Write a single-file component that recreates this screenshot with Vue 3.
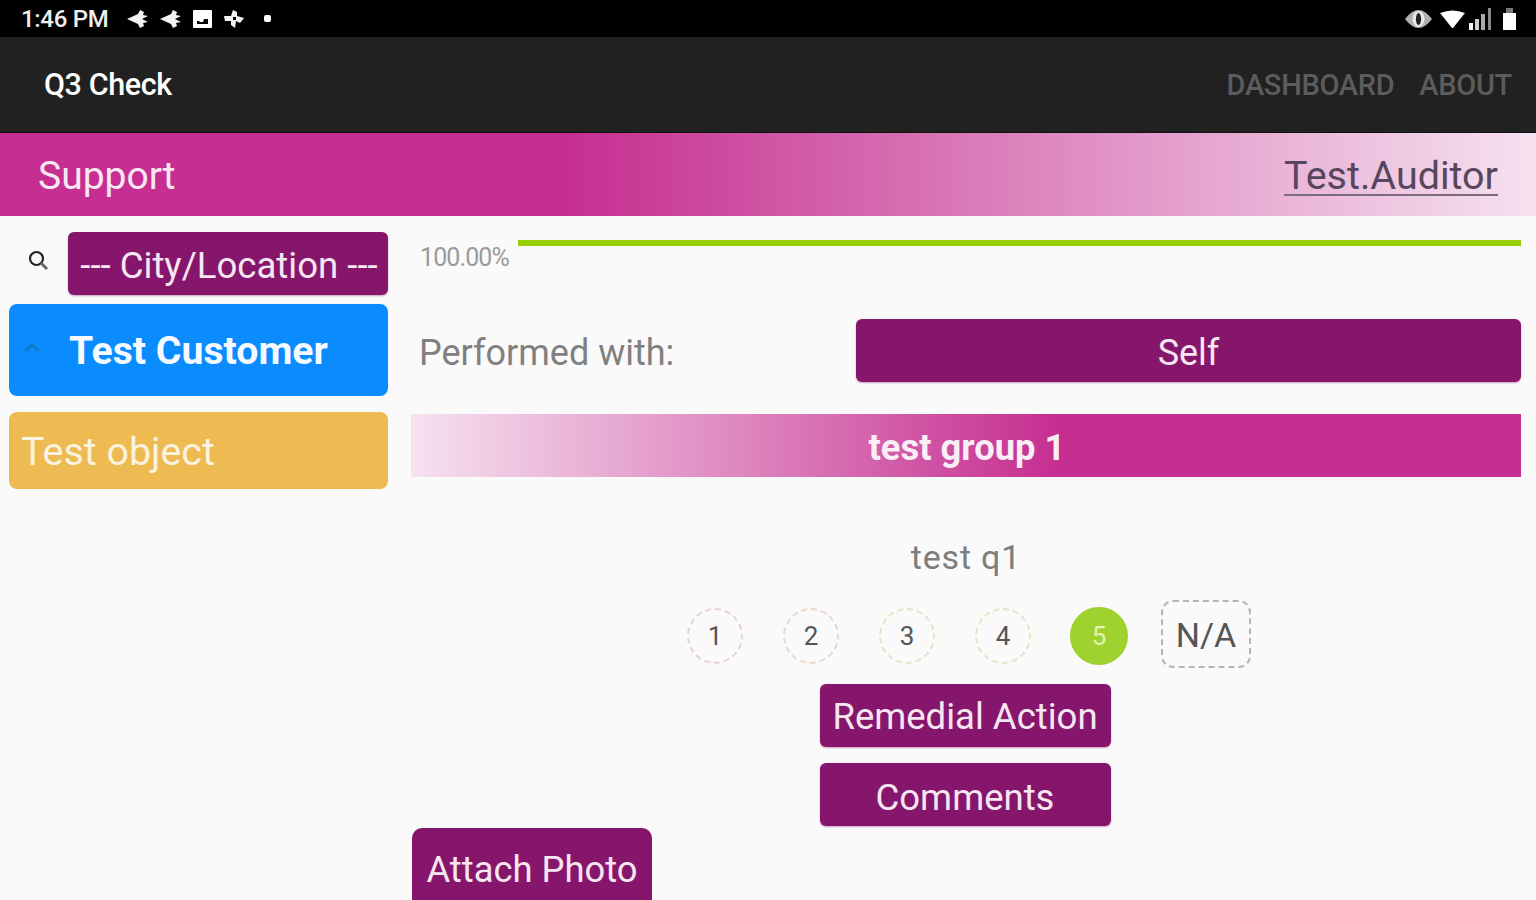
<template>
  <div class="screen">
    <div class="status-bar">
      <div class="status-left">
        <span class="clock">1:46 PM</span>
        <svg class="st-icon" width="21" height="18" viewBox="0 0 21 18"><path d="M0 9 L11 4 L13 0 L17 2 L16 5 L21 6 L15 9 L21 12 L16 13 L17 16 L13 18 L11 14 Z" fill="#f2f2f2" /></svg>
        <svg class="st-icon" width="21" height="18" viewBox="0 0 21 18"><path d="M0 9 L11 4 L13 0 L17 2 L16 5 L21 6 L15 9 L21 12 L16 13 L17 16 L13 18 L11 14 Z" fill="#f2f2f2" /></svg>
        <svg class="st-icon" width="19" height="18" viewBox="0 0 19 18"><path fill-rule="evenodd" d="M1 0 H18 Q19 0 19 1 V17 Q19 18 18 18 H1 Q0 18 0 17 V1 Q0 0 1 0 Z M4 14 H15 V9 H11 L10 12 H7 L6 11 H4 Z" fill="#fff" /></svg>
        <svg class="st-icon" width="20" height="18" viewBox="0 0 20 18"><path d="M9 0 L13 2 L13 6 L20 8 L16 13 L12 11 L11 18 L7 15 L7 11 L1 11 L0 6 L7 6 Z M9 7 L9 10 L12 10 L12 7 Z" fill="#f2f2f2" fill-rule="evenodd" /></svg>
        <span class="dot"></span>
      </div>
      <div class="status-right">
        <svg class="st-icon eye" width="27" height="18" viewBox="0 0 27 18">
          <path d="M0 9 Q7 0 13.5 0 Q20 0 27 9 Q20 18 13.5 18 Q7 18 0 9 Z" fill="#b0b0b0" />
          <ellipse cx="13.5" cy="9" rx="6" ry="8" fill="#e8e8e8" />
          <ellipse cx="13.5" cy="9" rx="2.6" ry="6" fill="#222" />
        </svg>
        <svg class="st-icon wifi" width="25" height="18" viewBox="0 0 25 18"><path d="M0 3 Q12.5 -2 25 3 L13 18 H12 Z" fill="#fff" /></svg>
        <svg class="st-icon signal" width="23" height="22" viewBox="0 0 23 22"><rect x="0" y="15" width="4" height="7" fill="#f2f2f2" /><rect x="6" y="11" width="4" height="11" fill="#ccc" /><rect x="12" y="6" width="4" height="16" fill="#aaa" /><rect x="19" y="0" width="3" height="22" fill="#888" /></svg>
        <svg class="st-icon battery" width="15" height="22" viewBox="0 0 15 22"><rect x="4" y="0" width="7" height="5" fill="#777" /><rect x="1" y="5" width="13" height="17" fill="#fff" /></svg>
      </div>
    </div>

    <header class="app-bar">
      <span class="app-title">Q3 Check</span>
      <nav class="app-nav">
        <span>DASHBOARD</span>
        <span>ABOUT</span>
      </nav>
    </header>

    <div class="banner">
      <span class="banner-title">Support</span>
      <span class="banner-user">Test.Auditor</span>
    </div>

    <main class="content">
      <aside class="sidebar">
        <div class="search-row">
          <svg class="search-icon" width="24" height="24" viewBox="0 0 24 24" fill="none" stroke="#222">
            <circle cx="10.5" cy="10.5" r="6.5" stroke-width="2.2" />
            <path d="M15 15 L21 21" stroke-width="3" stroke="#666" />
          </svg>
          <button class="select-btn">--- City/Location ---</button>
        </div>
        <div class="customer">
          <svg class="chevron" width="20" height="12" viewBox="0 0 20 12" fill="none"><path d="M3 9 L10 3 L17 9" stroke="#1576c4" stroke-width="2.5" /></svg>
          <span>Test Customer</span>
        </div>
        <div class="object-card">Test object</div>
      </aside>

      <section class="panel">
        <div class="progress-row">
          <span class="percent">100.00%</span>
          <div class="progress-track"><div class="progress-fill" :style="{ width: progress + '%' }"></div></div>
        </div>

        <div class="performed-row">
          <span class="performed-label">Performed with:</span>
          <button class="self-btn">Self</button>
        </div>

        <div class="group-bar">test group 1</div>

        <div class="question">test q1</div>

        <div class="ratings">
          <span
            v-for="r in ratings"
            :key="r.value"
            class="rating"
            :class="{ active: r.active }"
            :style="{ borderColor: r.color }"
          >{{ r.value }}</span>
          <span class="rating-na">N/A</span>
        </div>

        <div class="actions">
          <button class="action-btn remedial">Remedial Action</button>
          <button class="action-btn">Comments</button>
        </div>

        <button class="attach-btn">Attach Photo</button>
      </section>
    </main>
  </div>
</template>

<script setup>
const progress = 100

const ratings = [
  { value: 1, color: '#eccfd0' },
  { value: 2, color: '#ecd5cc' },
  { value: 3, color: '#e9e2c4' },
  { value: 4, color: '#e3e6c4' },
  { value: 5, color: '#9ed22e', active: true },
]
</script>

<style>
html, body {
  margin: 0;
  background: #fafafa;
}
</style>

<style scoped>
.screen {
  width: 1536px;
  height: 900px;
  overflow: hidden;
  background: #fafafa;
  font-family: Roboto, "Liberation Sans", sans-serif;
}

.status-bar {
  height: 37px;
  background: #000;
  color: #eee;
  display: flex;
  justify-content: space-between;
  align-items: center;
  padding: 0 19px 0 21px;
  box-sizing: border-box;
}

.st-icon {
  filter: blur(0.7px);
}

.status-left {
  display: flex;
  align-items: center;
  gap: 12px;
}

.clock {
  font-size: 24px;
  font-weight: 500;
  margin-right: 7px;
  letter-spacing: -0.3px;
}

.dot {
  width: 7px;
  height: 7px;
  background: #fff;
  border-radius: 2px;
  margin-left: 8px;
  filter: blur(0.7px);
}

.status-right {
  display: flex;
  align-items: center;
}

.wifi {
  margin-left: 8px;
}

.signal {
  margin-left: 4px;
}

.battery {
  margin-left: 10px;
}

.app-bar {
  height: 96px;
  background: #212121;
  border-bottom: 1px solid #111;
  box-sizing: border-box;
  display: flex;
  justify-content: space-between;
  align-items: center;
  padding: 0 24px 0 44px;
}

.app-title {
  color: #fff;
  font-size: 30.5px;
  font-weight: 500;
  letter-spacing: -0.4px;
}

.app-nav {
  display: flex;
  gap: 25px;
  color: #5c5c5c;
  font-size: 29px;
  font-weight: 500;
  letter-spacing: -0.3px;
}

.banner {
  height: 83px;
  background: linear-gradient(to right, #c62f91 0%, #c62f91 37%, #f6e2f0 100%);
  display: flex;
  justify-content: space-between;
  align-items: center;
  padding: 2px 38px 0;
  box-sizing: border-box;
}

.banner-title {
  color: #f8e8f3;
  font-size: 39px;
}

.banner-user {
  color: #57465c;
  font-size: 39.5px;
  text-decoration: underline;
  text-decoration-color: #7c6a80;
  text-decoration-thickness: 2px;
  text-underline-offset: 5px;
}

.content {
  display: flex;
  gap: 23px;
  padding: 16px 15px 0 9px;
}

.sidebar {
  width: 379px;
  flex-shrink: 0;
  display: flex;
  flex-direction: column;
}

.search-row {
  display: flex;
  align-items: center;
  justify-content: space-between;
  padding-left: 17px;
  margin-bottom: 9px;
}

.search-icon {
  margin-bottom: 8px;
}

button {
  font-family: inherit;
  border: none;
  padding: 4px 0 0;
  color: #f6e6f2;
  background: #86166c;
  border-radius: 6px;
}

.select-btn {
  width: 320px;
  height: 63px;
  font-size: 36.6px;
  padding-left: 2px;
  box-shadow: 0 1px 2px rgba(134, 22, 108, 0.4);
  white-space: nowrap;
}

.customer {
  height: 92px;
  background: #0a8cff;
  border-radius: 8px;
  color: #f4faff;
  display: flex;
  align-items: center;
  font-size: 39.2px;
  font-weight: 700;
  padding: 2px 0 0 13px;
  box-sizing: border-box;
  gap: 27px;
  margin-bottom: 16px;
}

.chevron {
  width: 20px;
  margin-bottom: 7px;
  flex-shrink: 0;
}

.object-card {
  height: 77px;
  background: #eeba52;
  border-radius: 8px;
  color: #fbf3df;
  font-size: 39.4px;
  display: flex;
  align-items: center;
  padding: 2px 0 0 12px;
  box-sizing: border-box;
}

.panel {
  flex: 1;
  min-width: 0;
  display: flex;
  flex-direction: column;
}

.progress-row {
  display: flex;
  gap: 7px;
  padding-left: 9px;
  height: 87px;
}

.percent {
  color: #9a9a9a;
  font-size: 25px;
  letter-spacing: -0.9px;
  margin-top: 13px;
  line-height: 1;
  width: 91px;
}

.progress-track {
  flex: 1;
  height: 6px;
  margin-top: 8px;
  background: #e6e6e6;
}

.progress-fill {
  height: 100%;
  background: #96cf00;
}

.performed-row {
  display: flex;
  justify-content: space-between;
  align-items: center;
  padding-left: 8px;
  margin-bottom: 32px;
}

.performed-label {
  color: #808080;
  font-size: 36px;
  padding-top: 4px;
}

.self-btn {
  width: 665px;
  height: 63px;
  font-size: 36px;
  box-shadow: 0 1px 2px rgba(134, 22, 108, 0.4);
}

.group-bar {
  height: 63px;
  background: linear-gradient(to right, #f6e2f0 0%, #c62f91 58%, #c62f91 100%);
  color: #f9eef6;
  font-size: 36.4px;
  font-weight: 700;
  display: flex;
  align-items: center;
  justify-content: center;
  padding: 4px 0 0 2px;
  box-sizing: border-box;
  margin-bottom: 58px;
}

.question {
  text-align: center;
  color: #7d7d7d;
  font-size: 34px;
  letter-spacing: 0.8px;
  line-height: 44px;
  margin-bottom: 21px;
}

.ratings {
  display: flex;
  align-items: center;
  justify-content: center;
  gap: 40px;
  height: 68px;
  padding-left: 6px;
  margin-bottom: 16px;
}

.rating {
  width: 56px;
  height: 56px;
  margin-top: 3px;
  box-sizing: border-box;
  border: 2px dashed #ddd;
  border-radius: 50%;
  display: flex;
  align-items: center;
  justify-content: center;
  color: #555;
  font-size: 26px;
}

.rating.active {
  background: #9ed22e;
  border-style: solid;
  color: #e3f3b0;
  width: 58px;
  height: 58px;
  margin: 3px -1px 0;
}

.rating-na {
  width: 90px;
  height: 68px;
  margin-left: -6px;
  padding-top: 2px;
  box-sizing: border-box;
  border: 2px dashed #b5b5b5;
  border-radius: 12px;
  display: flex;
  align-items: center;
  justify-content: center;
  color: #555;
  font-size: 34px;
}

.actions {
  display: flex;
  flex-direction: column;
  align-items: center;
  gap: 16px;
  padding-right: 2px;
}

.action-btn {
  width: 291px;
  height: 63px;
  font-size: 36.5px;
  padding-top: 6px;
  white-space: nowrap;
  box-shadow: 0 1px 2px rgba(134, 22, 108, 0.4);
}

.remedial {
  padding-top: 2px;
}

.attach-btn {
  align-self: flex-start;
  margin: 2px 0 0 1px;
  width: 240px;
  height: 84px;
  font-size: 36.4px;
  border-radius: 10px;
  padding: 0 0 2px;
  flex-shrink: 0;
  white-space: nowrap;
}
</style>
